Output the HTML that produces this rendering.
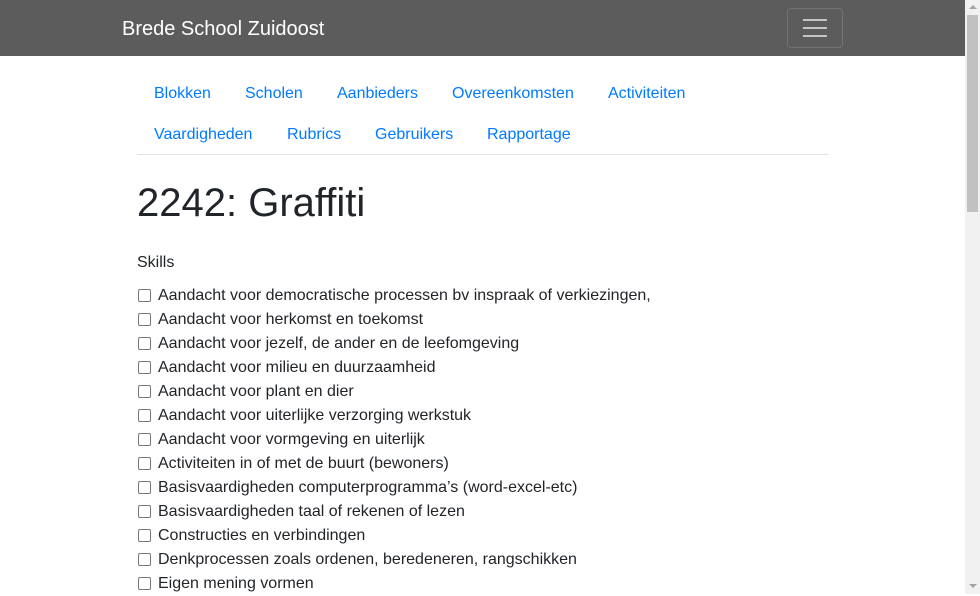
<!DOCTYPE html><html><head><style>
body{margin:0;width:980px;height:594px;overflow:hidden;font-family:"Liberation Sans",sans-serif;color:#212529;position:relative;background:#fff}
.nav{position:absolute;left:0;top:0;width:965px;height:56px;background:#5c5c5c}
.brand{position:absolute;left:122px;top:16px;color:#fff;font-size:20px;line-height:26px}
.tog{position:absolute;left:787px;top:8px;width:54px;height:38px;border:1px solid #737373;border-radius:4px}
.tog i{position:absolute;left:15px;width:24px;height:2px;background:#c4c4c4}
#sbar{position:absolute;left:965px;top:0;width:15px;height:594px;background:#f1f1f1}
#thumb{position:absolute;left:967px;top:15px;width:11px;height:197px;background:#c1c1c1}
#arr{position:absolute;left:969px;top:5px;width:0;height:0;border-left:4px solid transparent;border-right:4px solid transparent;border-bottom:4px solid #a3a3a3}
#arr2{position:absolute;left:969px;top:584px;width:0;height:0;border-left:4px solid transparent;border-right:4px solid transparent;border-top:4px solid #a3a3a3}
.links{position:absolute;left:137px;top:74px;width:691px;height:80px;border-bottom:1px solid #dee2e6}
.links a{position:absolute;color:#007bff;font-size:16px;text-decoration:none;line-height:40px}
h1{position:absolute;left:137px;top:179px;margin:0;font-size:40px;font-weight:400;line-height:48px}
.sk{position:absolute;left:137px;top:253px;font-size:16px;line-height:20px}
.list{position:absolute;left:138px;top:284px;font-size:16px}
.list div{height:24px;line-height:24px;position:relative;padding-left:20px}
.list span{position:absolute;left:0;top:5px;width:11px;height:11px;border:1px solid #767676;border-radius:2px}
</style></head><body>
<div class="nav"><div class="brand">Brede School Zuidoost</div><div class="tog"><i style="top:10px"></i><i style="top:18px"></i><i style="top:26px"></i></div></div>
<div id="sbar"></div><div id="thumb"></div><div id="arr"></div><div id="arr2"></div>
<div class="links">
<a style="left:17px;top:0">Blokken</a><a style="left:108px;top:0">Scholen</a><a style="left:200px;top:0">Aanbieders</a><a style="left:315px;top:0">Overeenkomsten</a><a style="left:471px;top:0">Activiteiten</a>
<a style="left:17px;top:41px">Vaardigheden</a><a style="left:150px;top:41px">Rubrics</a><a style="left:238px;top:41px">Gebruikers</a><a style="left:350px;top:41px">Rapportage</a>
</div>
<h1>2242: Graffiti</h1>
<div class="sk">Skills</div>
<div class="list">
<div><span></span>Aandacht voor democratische processen bv inspraak of verkiezingen,</div>
<div><span></span>Aandacht voor herkomst en toekomst</div>
<div><span></span>Aandacht voor jezelf, de ander en de leefomgeving</div>
<div><span></span>Aandacht voor milieu en duurzaamheid</div>
<div><span></span>Aandacht voor plant en dier</div>
<div><span></span>Aandacht voor uiterlijke verzorging werkstuk</div>
<div><span></span>Aandacht voor vormgeving en uiterlijk</div>
<div><span></span>Activiteiten in of met de buurt (bewoners)</div>
<div><span></span>Basisvaardigheden computerprogramma’s (word-excel-etc)</div>
<div><span></span>Basisvaardigheden taal of rekenen of lezen</div>
<div><span></span>Constructies en verbindingen</div>
<div><span></span>Denkprocessen zoals ordenen, beredeneren, rangschikken</div>
<div><span></span>Eigen mening vormen</div>
</div>
</body></html>
